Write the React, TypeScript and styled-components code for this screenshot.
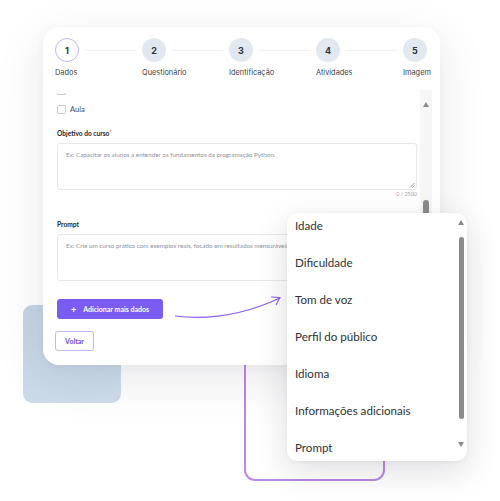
import * as React from "react";
import styled, {createGlobalStyle} from "styled-components";

const GlobalStyle = createGlobalStyle`
  html, body {
    margin: 0;
    padding: 0;
    background: #ffffff;
  }
  body {
    font-family: Lato, "Noto Sans", sans-serif;
  }
`;

const Canvas = styled.div`
  position: relative;
  width: 500px;
  height: 501px;
  overflow: hidden;
  background: #ffffff;
`;

const BlueTile = styled.div`
  position: absolute;
  left: 23px;
  top: 305px;
  width: 98px;
  height: 98px;
  border-radius: 9px;
  background: linear-gradient(160deg, #c3d4e5 0%, #cfdeec 100%);
`;

const PurpleFrame = styled.div`
  position: absolute;
  left: 244px;
  top: 330px;
  width: 137px;
  height: 147px;
  border: 2px solid #b98ae8;
  border-radius: 11px;
`;

const Card = styled.div`
  position: absolute;
  left: 43px;
  top: 27px;
  width: 397px;
  height: 338px;
  background: #ffffff;
  border-radius: 16px;
  box-shadow: 0 14px 50px rgba(30, 30, 50, 0.10), 0 2px 8px rgba(30, 30, 50, 0.04);
  display: flex;
  flex-direction: column;
  overflow: hidden;
`;

const Stepper = styled.div`
  display: flex;
  align-items: flex-start;
  padding: 11px 13px 0 12px;
  height: 53px;
  box-sizing: border-box;
  flex-shrink: 0;
`;

const Step = styled.div`
  width: 24px;
  display: flex;
  flex-direction: column;
  align-items: flex-start;
`;

const Circle = styled.div<{ $active?: boolean }>`
  width: 24px;
  height: 24px;
  box-sizing: border-box;
  border-radius: 50%;
  display: flex;
  align-items: center;
  justify-content: center;
  font-family: Inter, "Noto Sans", sans-serif;
  font-size: 9px;
  font-weight: 700;
  color: #2d3340;
  background: ${p => p.$active ? "#ffffff" : "#e2e8f0"};
  border: ${p => p.$active ? "1.2px solid #c4b2f7" : "none"};
`;

const StepLabel = styled.div`
  margin-top: 6px;
  font-family: Inter, "Noto Sans", sans-serif;
  font-size: 7.4px;
  line-height: 10px;
  color: #3a3f4a;
  white-space: nowrap;
`;

const Connector = styled.div`
  flex: 1;
  height: 1px;
  margin: 12px 6px 0;
  background: #eef0f4;
`;

const Body = styled.div`
  display: flex;
  flex: 1;
  min-height: 0;
`;

const ScrollArea = styled.div`
  flex: 1;
  overflow: hidden;
  padding: 0 3px 0 14px;
  margin-top: 13px;
`;

const Content = styled.div`
  display: flex;
  flex-direction: column;
  align-items: flex-start;
  padding-bottom: 30px;
`;

const CheckRow = styled.label<{ $gap?: number }>`
  display: flex;
  align-items: center;
  gap: 4px;
  height: 10px;
  margin-top: ${p => p.$gap ?? 0}px;
  font-size: 7.6px;
  color: #444a55;
`;

const Box = styled.span`
  width: 7px;
  height: 7px;
  border: 1px solid #c9ccd2;
  border-radius: 1px;
  background: #fff;
`;

const FieldLabel = styled.div<{ $gap: number }>`
  margin-top: ${p => p.$gap}px;
  font-size: 6.6px;
  line-height: 9px;
  font-weight: 700;
  color: #23262d;
  sup {
    color: #f06a8a;
    font-size: 6px;
    vertical-align: top;
    line-height: 6px;
  }
`;

const TextArea = styled.div`
  position: relative;
  margin-top: 5px;
  width: 360px;
  height: 47px;
  box-sizing: border-box;
  border: 1px solid #e6e8ec;
  border-radius: 3px;
  padding: 6px 8px;
  font-size: 6.3px;
  line-height: 9px;
  color: #8c93a2;
  white-space: nowrap;
  overflow: hidden;
`;

const ResizeGrip = styled.svg`
  position: absolute;
  right: 1px;
  bottom: 1px;
`;

const Counter = styled.div`
  align-self: stretch;
  text-align: right;
  margin-top: 1px;
  font-size: 5.4px;
  line-height: 7px;
  color: #9aa0ab;
`;

const PrimaryButton = styled.button`
  margin-top: 18px;
  width: 106px;
  height: 20px;
  border: none;
  border-radius: 3px;
  background: #7b5cf3;
  color: #ffffff;
  font-family: Lato, "Noto Sans", sans-serif;
  font-size: 7px;
  font-weight: 700;
  display: flex;
  align-items: center;
  justify-content: center;
  gap: 7px;
  padding: 0;
  span {
    font-size: 9px;
    font-weight: 700;
  }
`;

const GhostButton = styled.button`
  margin-top: 12px;
  margin-left: -2px;
  width: 39px;
  height: 20px;
  border: 1px solid #c2b3f4;
  border-radius: 3px;
  background: #ffffff;
  color: #6a50d6;
  font-family: Lato, "Noto Sans", sans-serif;
  font-size: 7px;
  font-weight: 700;
  padding: 0;
`;

const Track = styled.div`
  width: 12px;
  margin: 10px 8px 0 0;
  padding-top: 12px;
  background: #f6f6f7;
  display: flex;
  flex-direction: column;
  align-items: center;
`;

const ArrowBtn = styled.div<{ $down?: boolean }>`
  width: 0;
  height: 0;
  border-left: 3.5px solid transparent;
  border-right: 3.5px solid transparent;
  ${p => p.$down ? "border-top: 5px solid #8a8a8a;" : "border-bottom: 5px solid #8a8a8a;"}
`;

const Thumb = styled.div<{ $top: number; $h: number; $w: number }>`
  margin-top: ${p => p.$top}px;
  width: ${p => p.$w}px;
  height: ${p => p.$h}px;
  border-radius: 3px;
  background: #8a8a8a;
`;

const Arrow = styled.svg`
  position: absolute;
  left: 170px;
  top: 290px;
`;

const Dropdown = styled.div`
  position: absolute;
  left: 287px;
  top: 213px;
  width: 180px;
  height: 248px;
  background: #ffffff;
  border-radius: 10px;
  box-shadow: 0 10px 34px rgba(20, 20, 40, 0.14), 0 1px 4px rgba(20, 20, 40, 0.05);
  display: flex;
  overflow: hidden;
`;

const OptionList = styled.ul`
  list-style: none;
  margin: 0;
  padding: 0;
  flex: 1;
`;

const Option = styled.li`
  height: 37px;
  box-sizing: border-box;
  padding: 6px 0 0 8px;
  font-size: 11.6px;
  line-height: 14px;
  color: #2f3237;
  white-space: nowrap;
`;

const DropTrack = styled.div`
  width: 8px;
  margin-right: 2px;
  padding-top: 7px;
  display: flex;
  flex-direction: column;
  align-items: center;
`;

const steps = ["Dados", "Questionário", "Identificação", "Atividades", "Imagem"];
const options = ["Idade", "Dificuldade", "Tom de voz", "Perfil do público", "Idioma", "Informações adicionais", "Prompt"];

const App = () => {
    const scrollRef = React.useRef<HTMLDivElement>(null);
    React.useLayoutEffect(() => {
        if (scrollRef.current) scrollRef.current.scrollTop = 8;
    }, []);

    return (
        <Canvas>
            <GlobalStyle/>
            <BlueTile/>
            <PurpleFrame/>
            <Card>
                <Stepper>
                    {steps.map((label, i) =>
                        <React.Fragment key={label}>
                            {i > 0 && <Connector/>}
                            <Step>
                                <Circle $active={i === 0}>{i + 1}</Circle>
                                <StepLabel>{label}</StepLabel>
                            </Step>
                        </React.Fragment>
                    )}
                </Stepper>
                <Body>
                    <ScrollArea ref={scrollRef}>
                        <Content>
                            <CheckRow><Box/>Módulo</CheckRow>
                            <CheckRow $gap={9}><Box/>Aula</CheckRow>
                            <FieldLabel $gap={15}>Objetivo do curso<sup>*</sup></FieldLabel>
                            <TextArea>
                                Ex: Capacitar os alunos a entender os fundamentos da programação Python.
                                <ResizeGrip width="6" height="6" viewBox="0 0 6 6">
                                    <path d="M1 5.5 L5.5 1 M3.5 5.5 L5.5 3.5" stroke="#6b6f78" strokeWidth="0.7"/>
                                </ResizeGrip>
                            </TextArea>
                            <Counter>0 / 2500</Counter>
                            <FieldLabel $gap={22}>Prompt</FieldLabel>
                            <TextArea>
                                Ex: Crie um curso prático com exemplos reais, focado em resultados mensuráveis.
                            </TextArea>
                            <PrimaryButton><span>+</span>Adicionar mais dados</PrimaryButton>
                            <GhostButton>Voltar</GhostButton>
                        </Content>
                    </ScrollArea>
                    <Track>
                        <ArrowBtn/>
                        <Thumb $top={93} $h={40} $w={6}/>
                    </Track>
                </Body>
            </Card>
            <Arrow width="120" height="35" viewBox="0 0 120 35">
                <path d="M5 26 C 45 31, 80 22, 110 8" fill="none" stroke="#8f5fe8" strokeWidth="1.1"/>
                <path d="M101 7 L110 7.5 L106 15" fill="none" stroke="#8f5fe8" strokeWidth="1.1"/>
            </Arrow>
            <Dropdown>
                <OptionList>
                    {options.map(o => <Option key={o}>{o}</Option>)}
                </OptionList>
                <DropTrack>
                    <ArrowBtn/>
                    <Thumb $top={12} $h={182} $w={5}/>
                    <div style={{marginTop: 23}}><ArrowBtn $down/></div>
                </DropTrack>
            </Dropdown>
        </Canvas>
    );
};

export default App;
